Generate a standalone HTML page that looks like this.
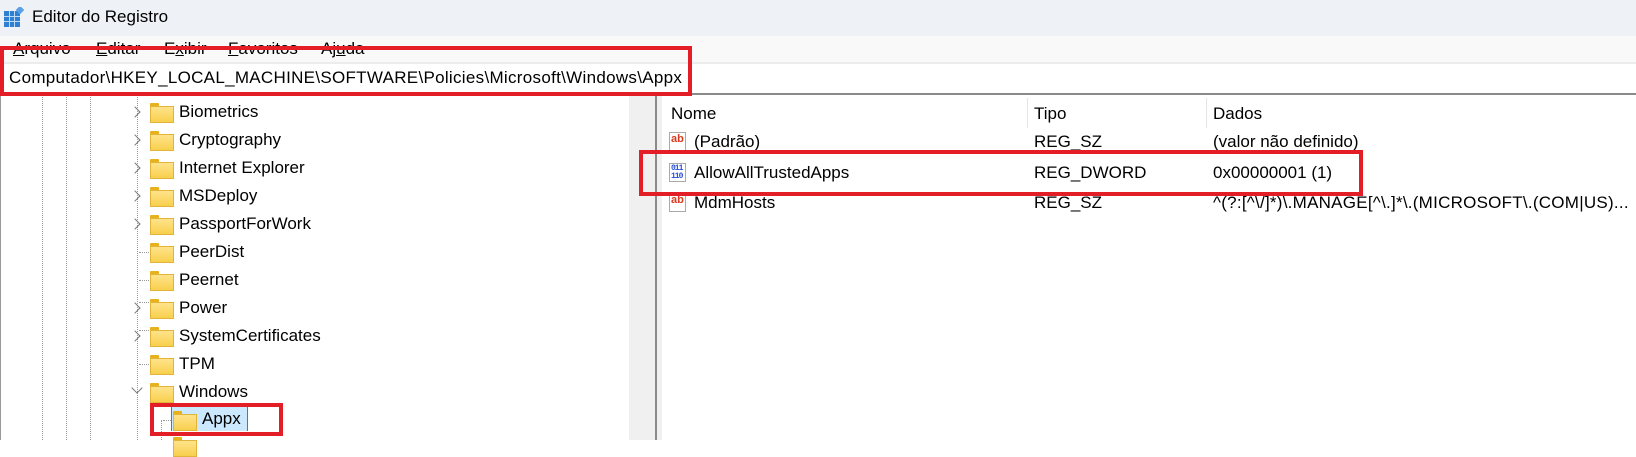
<!DOCTYPE html>
<html><head><meta charset="utf-8"><style>
*{margin:0;padding:0;box-sizing:border-box}
body{width:1636px;height:440px;overflow:hidden;background:#fff;font-family:"Liberation Sans",sans-serif;font-size:17px;color:#000;position:relative}
.a{position:absolute;white-space:nowrap}
.t{line-height:20px}
.fold{position:absolute;width:22px;height:18px}
.fold::before{content:"";position:absolute;left:0;top:0;width:9px;height:4px;background:#e8b21c;border-radius:1px 1px 0 0}
.fold::after{content:"";position:absolute;left:0;top:3px;width:22px;height:15px;background:linear-gradient(#ffe38a,#f8cf4e);border:1px solid #e2b43a}
.chev{position:absolute;width:8px;height:8px;border-right:1.5px solid #777;border-top:1.5px solid #777;transform:rotate(45deg)}
.vd{position:absolute;width:0;border-left:1px dotted #999}
.hd{position:absolute;height:0;border-top:1px dotted #999}
.red{position:absolute;border:4px solid #e41e26}
.ab{position:absolute;width:17px;height:19px;border:1px solid #aaa;background:#fff;font:bold 11px "Liberation Sans",sans-serif;color:#d83b1f;line-height:12px;padding-left:1px}
.bin{position:absolute;width:17px;height:19px;border:1px solid #aaa;background:#fff;font:bold 8px "Liberation Mono",monospace;color:#2a4fd8;line-height:8px;padding:1px 0 0 1px;letter-spacing:-1px}
</style></head><body>
<div class="a" style="left:0;top:0;width:1636px;height:36px;background:#eef1f6"></div>
<svg class="a" style="left:4px;top:7px" width="20" height="20"><rect x="0" y="4" width="16" height="16" fill="#2f7fd3"/><g stroke="#bcd9f5" stroke-width="1"><line x1="5.5" y1="4" x2="5.5" y2="20"/><line x1="10.5" y1="4" x2="10.5" y2="20"/><line x1="0" y1="9.5" x2="16" y2="9.5"/><line x1="0" y1="14.5" x2="16" y2="14.5"/></g><rect x="13" y="0" width="6" height="6" fill="#5aa0e6" transform="rotate(45 16 3)"/></svg>
<div class="a t" style="left:32px;top:7px">Editor do Registro</div>
<div class="a" style="left:0;top:36px;width:1636px;height:27px;background:#f9f9f9"></div>
<div class="a t" style="left:13px;top:39px"><u>A</u>rquivo</div>
<div class="a t" style="left:96px;top:39px"><u>E</u>ditar</div>
<div class="a t" style="left:164px;top:39px">E<u>x</u>ibir</div>
<div class="a t" style="left:228px;top:39px"><u>F</u>avoritos</div>
<div class="a t" style="left:321px;top:39px">Aj<u>u</u>da</div>
<div class="a" style="left:0;top:62px;width:1636px;height:2px;background:#ececec"></div>
<div class="a t" style="left:9px;top:68px;letter-spacing:0.3px">Computador\HKEY_LOCAL_MACHINE\SOFTWARE\Policies\Microsoft\Windows\Appx</div>
<div class="a" style="left:0;top:93px;width:1636px;height:2px;background:#8a8a8a"></div>
<div class="a" style="left:0;top:95px;width:1px;height:345px;background:#999"></div>
<div class="a" style="left:629px;top:95px;width:26px;height:345px;background:#f0f0f0"></div>
<div class="a" style="left:655px;top:95px;width:2px;height:345px;background:#8a8a8a"></div>
<div class="a" style="left:657px;top:95px;width:5px;height:345px;background:#f0f0f0"></div>
<div class="vd" style="left:42px;top:95px;height:345px"></div>
<div class="vd" style="left:66px;top:95px;height:345px"></div>
<div class="vd" style="left:90px;top:95px;height:345px"></div>
<div class="vd" style="left:137px;top:95px;height:345px"></div>
<div class="vd" style="left:161px;top:420px;height:20px"></div>
<div class="hd" style="left:139px;top:302px;width:10px"></div>
<div class="hd" style="left:139px;top:330px;width:10px"></div>
<div class="hd" style="left:163px;top:420px;width:8px"></div>
<div class="chev" style="left:131px;top:108px"></div><div class="fold" style="left:150px;top:103px"></div><div class="a t" style="left:179px;top:102px">Biometrics</div>
<div class="chev" style="left:131px;top:136px"></div><div class="fold" style="left:150px;top:131px"></div><div class="a t" style="left:179px;top:130px">Cryptography</div>
<div class="chev" style="left:131px;top:164px"></div><div class="fold" style="left:150px;top:159px"></div><div class="a t" style="left:179px;top:158px">Internet Explorer</div>
<div class="chev" style="left:131px;top:192px"></div><div class="fold" style="left:150px;top:187px"></div><div class="a t" style="left:179px;top:186px">MSDeploy</div>
<div class="chev" style="left:131px;top:220px"></div><div class="fold" style="left:150px;top:215px"></div><div class="a t" style="left:179px;top:214px">PassportForWork</div>
<div class="fold" style="left:150px;top:243px"></div><div class="a t" style="left:179px;top:242px">PeerDist</div>
<div class="hd" style="left:139px;top:252px;width:10px"></div>
<div class="fold" style="left:150px;top:271px"></div><div class="a t" style="left:179px;top:270px">Peernet</div>
<div class="hd" style="left:139px;top:280px;width:10px"></div>
<div class="chev" style="left:131px;top:304px"></div><div class="fold" style="left:150px;top:299px"></div><div class="a t" style="left:179px;top:298px">Power</div>
<div class="chev" style="left:131px;top:332px"></div><div class="fold" style="left:150px;top:327px"></div><div class="a t" style="left:179px;top:326px">SystemCertificates</div>
<div class="fold" style="left:150px;top:355px"></div><div class="a t" style="left:179px;top:354px">TPM</div>
<div class="hd" style="left:139px;top:364px;width:10px"></div>
<div class="chev" style="left:133px;top:384px;transform:rotate(135deg)"></div><div class="fold" style="left:150px;top:383px"></div><div class="a t" style="left:179px;top:382px">Windows</div>
<div class="a" style="left:171px;top:407px;width:77px;height:24px;background:#cce8ff;border-left:1px solid #3a7bd5;border-right:1px solid #3a7bd5"></div>
<div class="fold" style="left:173px;top:411px"></div><div class="a t" style="left:202px;top:409px">Appx</div>
<div class="fold" style="left:173px;top:437px"></div>
<div class="a t" style="left:671px;top:104px">Nome</div>
<div class="a" style="left:1027px;top:98px;width:1px;height:30px;background:#e5e5e5"></div>
<div class="a t" style="left:1034px;top:104px">Tipo</div>
<div class="a" style="left:1206px;top:98px;width:1px;height:30px;background:#e5e5e5"></div>
<div class="a t" style="left:1213px;top:104px">Dados</div>
<div class="ab" style="left:669px;top:132px">ab</div>
<div class="a t" style="left:694px;top:132px">(Padrão)</div>
<div class="a t" style="left:1034px;top:132px">REG_SZ</div>
<div class="a t" style="left:1213px;top:132px">(valor não definido)</div>
<div class="bin" style="left:669px;top:163px">011<br>110</div>
<div class="a t" style="left:694px;top:163px">AllowAllTrustedApps</div>
<div class="a t" style="left:1034px;top:163px">REG_DWORD</div>
<div class="a t" style="left:1213px;top:163px">0x00000001 (1)</div>
<div class="ab" style="left:669px;top:193px">ab</div>
<div class="a t" style="left:694px;top:193px">MdmHosts</div>
<div class="a t" style="left:1034px;top:193px">REG_SZ</div>
<div class="a t" style="left:1213px;top:193px;letter-spacing:0.25px">^(?:[^\/]*)\.MANAGE[^\.]*\.(MICROSOFT\.(COM|US)...</div>
<div class="red" style="left:0;top:46px;width:692px;height:50px"></div>
<div class="red" style="left:639px;top:150px;width:724px;height:46px"></div>
<div class="red" style="left:150px;top:403px;width:133px;height:33px"></div>
</body></html>
